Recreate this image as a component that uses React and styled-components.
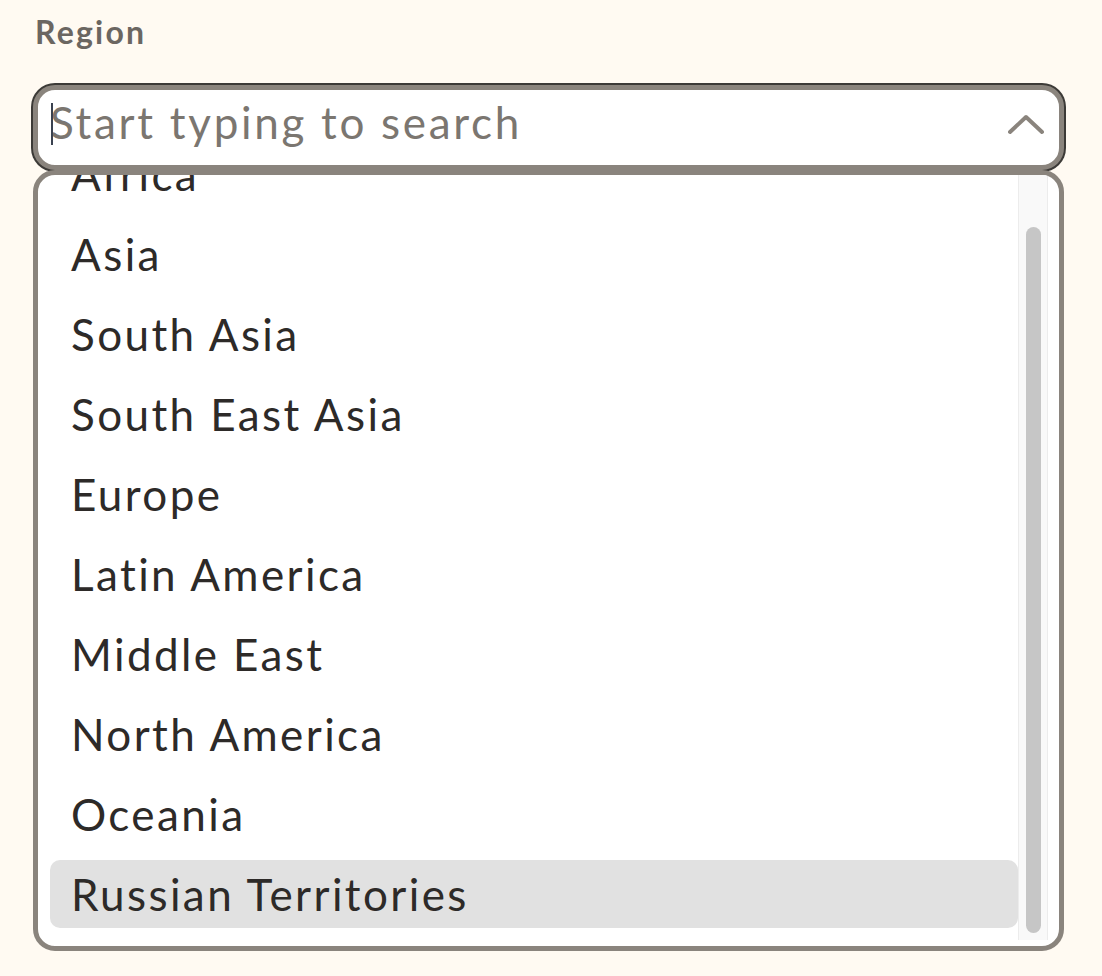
import React, { useLayoutEffect, useRef } from "react";
import styled, { createGlobalStyle } from "styled-components";

const GlobalStyle = createGlobalStyle`
  html, body {
    margin: 0;
    padding: 0;
    background: #fffaf2;
  }
  body {
    font-family: Lato, "Noto Sans", sans-serif;
  }
`;

const Page = styled.div`
  padding: 13px 38px 0 33px;
  min-height: 976px;
  box-sizing: border-box;
`;

const Label = styled.label`
  display: block;
  margin: 0 0 34px 2px;
  font-size: 32px;
  line-height: 38px;
  font-weight: 700;
  letter-spacing: 2.2px;
  color: #6b6661;
`;

const Combo = styled.div`
  position: relative;
  width: 1031px;
`;

const Field = styled.div`
  position: relative;
`;

const SearchInput = styled.input`
  display: block;
  width: 100%;
  height: 85px;
  box-sizing: border-box;
  padding: 0 80px 12px 12px;
  border: 5px solid #8a847d;
  border-radius: 22px;
  box-shadow: 0 0 0 2px #3c3a37;
  background: #ffffff;
  font-family: Lato, "Noto Sans", sans-serif;
  font-size: 44px;
  letter-spacing: 2.7px;
  color: #2d2a28;
  caret-color: transparent;
  outline: none;

  &::placeholder {
    color: #7b7670;
    opacity: 1;
  }
`;

const Caret = styled.span`
  position: absolute;
  left: 18px;
  top: 18px;
  width: 2px;
  height: 42px;
  background: #3a4250;
  pointer-events: none;
`;

const Chevron = styled.svg`
  position: absolute;
  right: 20px;
  top: 27px;
  width: 36px;
  height: 24px;
  pointer-events: none;
`;

const Dropdown = styled.div`
  position: absolute;
  left: 0;
  right: 0;
  top: 85px;
  height: 781px;
  box-sizing: border-box;
  display: flex;
  border: 5px solid #8a847d;
  border-radius: 22px;
  background: #ffffff;
  padding-right: 11px;
  overflow: hidden;
`;

const List = styled.ul`
  flex: 1;
  margin: 0;
  padding: 12px 0 18px 12px;
  list-style: none;
  overflow: hidden;
  display: flex;
  flex-direction: column;
  gap: 12px;
`;

const Option = styled.li`
  flex: none;
  height: 68px;
  line-height: 68px;
  padding-left: 21px;
  border-radius: 10px;
  font-size: 44px;
  letter-spacing: 2.4px;
  color: #2d2a28;
  background: ${(p) => (p.$active ? "#e1e1e1" : "transparent")};
  white-space: nowrap;
`;

const Track = styled.div`
  flex: none;
  width: 30px;
  height: 765px;
  box-sizing: border-box;
  background: #f9f9f9;
  border-left: 1px solid #ececec;
  border-right: 1px solid #ececec;
  display: flex;
  justify-content: center;
  padding-top: 52px;
  padding-bottom: 7px;
`;

const Thumb = styled.div`
  width: 15px;
  border-radius: 8px;
  background: #c6c6c6;
`;

const regions = [
  "Africa",
  "Asia",
  "South Asia",
  "South East Asia",
  "Europe",
  "Latin America",
  "Middle East",
  "North America",
  "Oceania",
  "Russian Territories",
];

export default function App() {
  const listRef = useRef(null);

  useLayoutEffect(() => {
    const el = listRef.current;
    if (el) el.scrollTop = el.scrollHeight;
  }, []);

  return (
    <>
      <GlobalStyle />
      <Page>
        <Label htmlFor="region">Region</Label>
        <Combo>
          <Field>
            <SearchInput
              id="region"
              autoFocus
              placeholder="Start typing to search"
            />
            <Caret />
            <Chevron viewBox="0 0 36 24">
              <polyline
                points="2,20 18,5 34,20"
                fill="none"
                stroke="#8a847d"
                strokeWidth="4"
                strokeLinecap="round"
                strokeLinejoin="round"
              />
            </Chevron>
          </Field>
          <Dropdown>
            <List ref={listRef}>
              {regions.map((r, i) => (
                <Option key={r} $active={i === regions.length - 1}>
                  {r}
                </Option>
              ))}
            </List>
            <Track>
              <Thumb />
            </Track>
          </Dropdown>
        </Combo>
      </Page>
    </>
  );
}
